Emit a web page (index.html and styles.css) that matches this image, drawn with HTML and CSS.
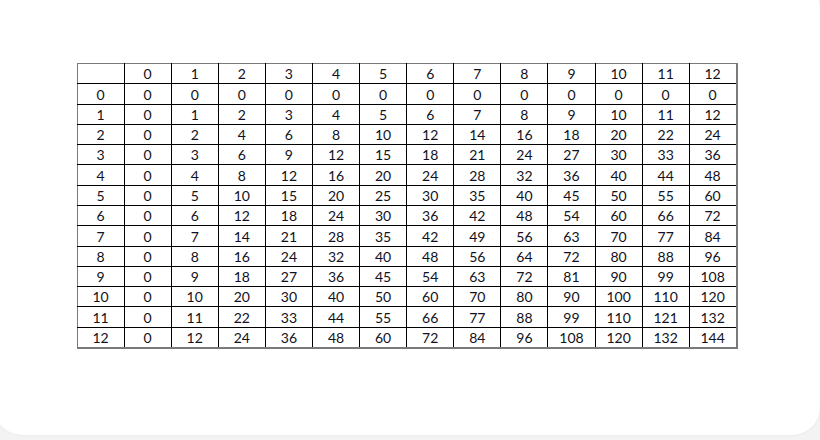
FILE: index.html
```html
<!DOCTYPE html>
<html>
<head>
<meta charset="utf-8">
<link rel="stylesheet" href="styles.css">
</head>
<body>
<div class="card">
<table class="grid" id="grid"></table>
</div>
<script>
var t = document.getElementById('grid');
var html = '<tr><td></td>';
for (var c = 0; c <= 12; c++) html += '<td>' + c + '</td>';
html += '</tr>';
for (var r = 0; r <= 12; r++) {
  html += '<tr><td>' + r + '</td>';
  for (var c2 = 0; c2 <= 12; c2++) html += '<td>' + (r * c2) + '</td>';
  html += '</tr>';
}
t.innerHTML = html;
</script>
</body>
</html>
```
FILE: styles.css
```css
html, body {
  margin: 0;
  padding: 0;
  background: #f3f3f3;
  width: 820px;
  height: 440px;
  overflow: hidden;
}
.card {
  margin: -20px 0 0 -6px;
  width: 826px;
  height: 455px;
  background: #ffffff;
  border-radius: 28px;
  box-shadow: 0 0 3px rgba(0,0,0,0.06);
  display: flex;
  justify-content: center;
  align-items: flex-start;
  padding-top: 83px;
  box-sizing: border-box;
}
.grid {
  border-collapse: collapse;
  table-layout: fixed;
  width: 661px;
  height: 286px;
  border: 1px solid #7a7a7a;
  font-family: "Lato", "Open Sans", sans-serif;
  font-size: 14px;
  color: #111122;
}
.grid td {
  border: 1px solid #000;
  height: 19px;
  padding: 0;
  text-align: center;
  vertical-align: bottom;
  line-height: 18px;
}
.grid tr:first-child td { border-top-color: #7a7a7a; }
.grid tr td:first-child { border-left-color: #7a7a7a; }
.grid tr td:last-child { border-right: 2px solid #7a7a7a; }
.grid tr:last-child td { border-bottom: 2px solid #7a7a7a; }
```
